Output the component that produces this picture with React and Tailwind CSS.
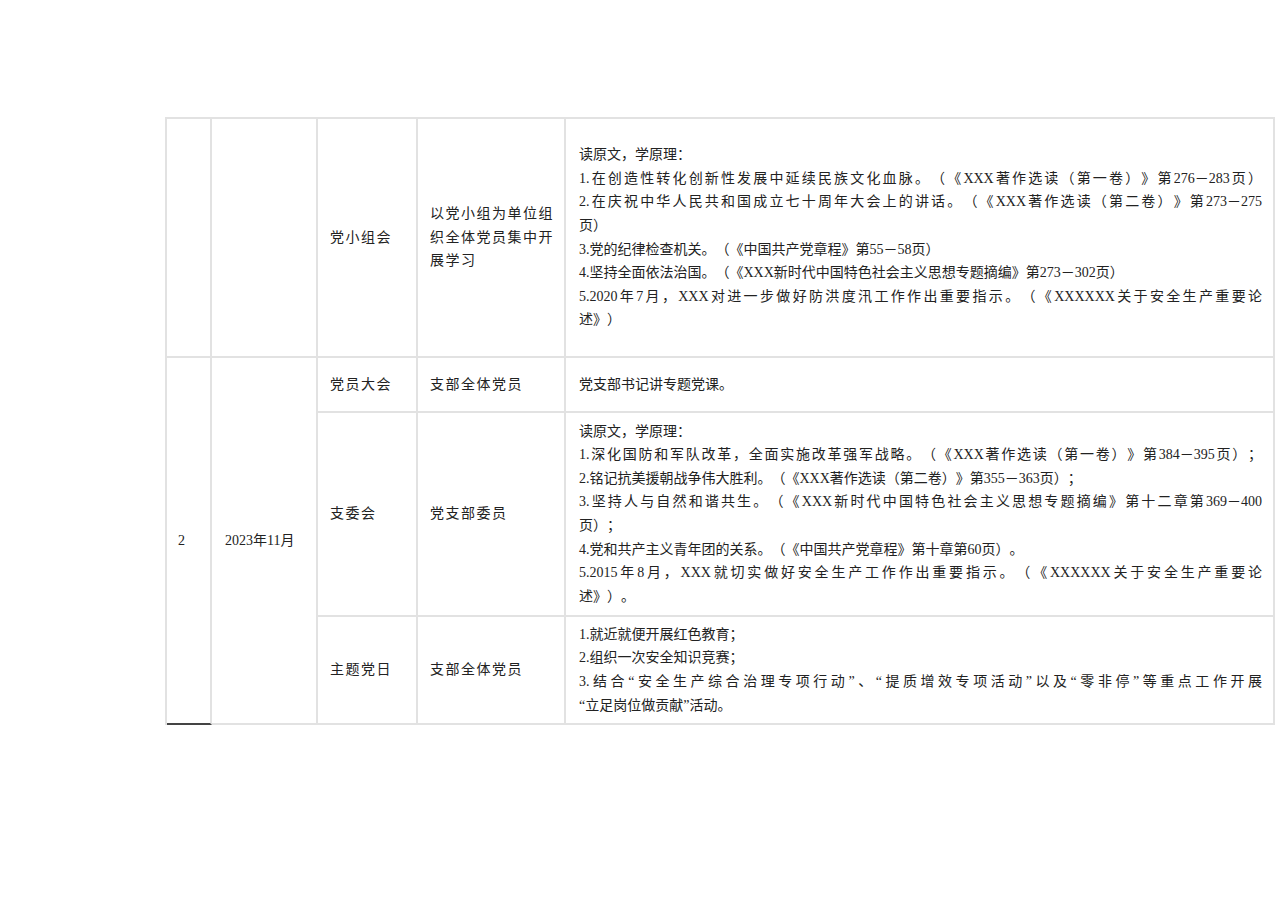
import React from 'react';

const font = { fontFamily: '"Liberation Serif", "Noto Sans CJK SC", serif' };

const studyA = [
  { t: '读原文，学原理：' },
  { t: '1.在创造性转化创新性发展中延续民族文化血脉。（《XXX著作选读（第一卷）》第276－283页）', full: true },
  { t: '2.在庆祝中华人民共和国成立七十周年大会上的讲话。（《XXX著作选读（第二卷）》第273－275', full: true },
  { t: '页）' },
  { t: '3.党的纪律检查机关。（《中国共产党章程》第55－58页）' },
  { t: '4.坚持全面依法治国。（《XXX新时代中国特色社会主义思想专题摘编》第273－302页）' },
  { t: '5.2020年7月，XXX对进一步做好防洪度汛工作作出重要指示。（《XXXXXX关于安全生产重要论', full: true },
  { t: '述》）' },
];

const studyB = [
  { t: '读原文，学原理：' },
  { t: '1.深化国防和军队改革，全面实施改革强军战略。（《XXX著作选读（第一卷）》第384－395页）；', full: true },
  { t: '2.铭记抗美援朝战争伟大胜利。（《XXX著作选读（第二卷）》第355－363页）；' },
  { t: '3.坚持人与自然和谐共生。（《XXX新时代中国特色社会主义思想专题摘编》第十二章第369－400', full: true },
  { t: '页）；' },
  { t: '4.党和共产主义青年团的关系。（《中国共产党章程》第十章第60页）。' },
  { t: '5.2015年8月，XXX就切实做好安全生产工作作出重要指示。（《XXXXXX关于安全生产重要论', full: true },
  { t: '述》）。' },
];

const dayItems = [
  { t: '1.就近就便开展红色教育；' },
  { t: '2.组织一次安全知识竞赛；' },
  { t: '3.结合“安全生产综合治理专项行动”、“提质增效专项活动”以及“零非停”等重点工作开展', full: true },
  { t: '“立足岗位做贡献”活动。' },
];

function Lines({ items }) {
  return (
    <div className="w-full">
      {items.map((line, i) => (
        <div
          key={i}
          className={line.full ? 'whitespace-nowrap text-justify [text-align-last:justify]' : 'whitespace-nowrap'}
        >
          {line.t}
        </div>
      ))}
    </div>
  );
}

const cell = 'flex items-center border-r-2 border-b-2 border-[#e2e2e2]';

export default function App() {
  return (
    <div
      className="min-h-screen bg-white pl-[165px] pt-[117px] text-[14px] leading-[23.6px] text-[#222] [text-spacing-trim:space-all]"
      style={font}
    >
      <div className="grid w-fit grid-cols-[45px_106px_100px_148px_709px] grid-rows-[239px_55px_204px_108px] border-l-2 border-t-2 border-[#e2e2e2]">
        {/* carried-over row */}
        <div className={cell}></div>
        <div className={cell}></div>
        <div className={`${cell} pl-3 tracking-[1.5px]`}>党小组会</div>
        <div className={`${cell} pl-3 tracking-[1.5px]`}>
          <div>
            <div>以党小组为单位组</div>
            <div>织全体党员集中开</div>
            <div>展学习</div>
          </div>
        </div>
        <div className={`${cell} pl-[13px] pr-[11px]`}>
          <Lines items={studyA} />
        </div>

        {/* month 2 */}
        <div className="row-span-3 flex items-center border-r-2 border-b-2 border-r-[#e2e2e2] border-b-[#444] pl-[11px]">2</div>
        <div className={`${cell} row-span-3 pl-[13px]`}>2023年11月</div>

        <div className={`${cell} pl-3 tracking-[1.5px]`}>党员大会</div>
        <div className={`${cell} pl-3 tracking-[1.5px]`}>支部全体党员</div>
        <div className={`${cell} pl-[13px]`}>党支部书记讲专题党课。</div>

        <div className={`${cell} pl-3 tracking-[1.5px]`}>支委会</div>
        <div className={`${cell} pl-3 tracking-[1.5px]`}>党支部委员</div>
        <div className={`${cell} pl-[13px] pr-[11px]`}>
          <Lines items={studyB} />
        </div>

        <div className={`${cell} pl-3 tracking-[1.5px]`}>主题党日</div>
        <div className={`${cell} pl-3 tracking-[1.5px]`}>支部全体党员</div>
        <div className={`${cell} pl-[13px] pr-[11px]`}>
          <Lines items={dayItems} />
        </div>
      </div>
    </div>
  );
}
